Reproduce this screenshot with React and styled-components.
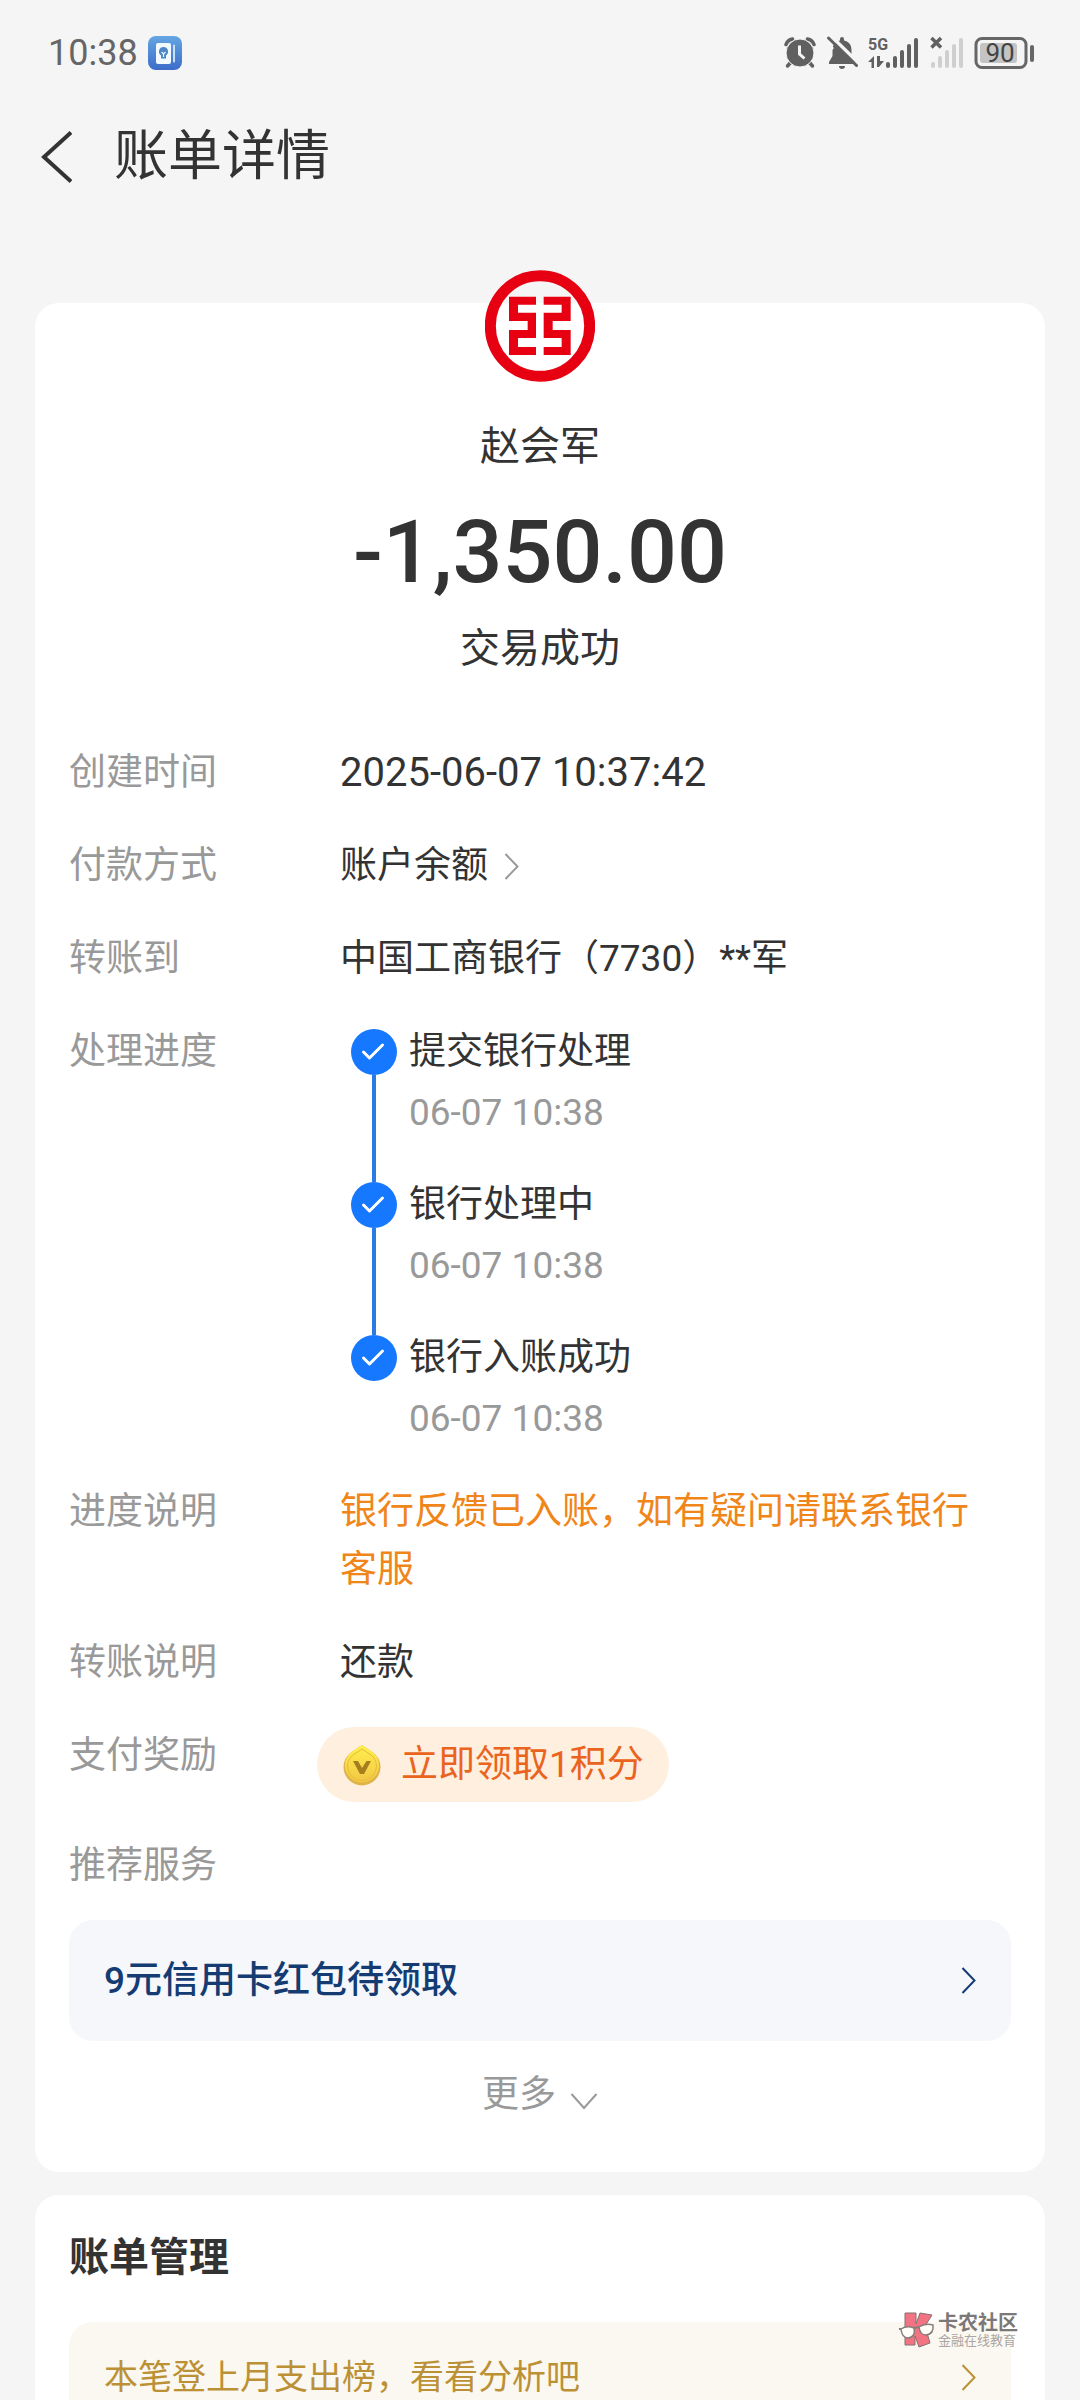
import React from 'react';
import styled, { createGlobalStyle, css } from 'styled-components';

const GlobalStyle = createGlobalStyle`
  * {
    box-sizing: border-box;
  }

  body {
    margin: 0;
    background: #f5f5f5;
    color: #333333;
    font-family: Roboto, 'Noto Sans CJK SC', sans-serif;
    font-size: 37px;
    line-height: 58px;
  }

  button {
    padding: 0;
    border: 0;
    background: none;
    color: inherit;
    font: inherit;
    cursor: pointer;
  }

  a {
    text-decoration: none;
  }

  svg {
    display: block;
    flex: none;
  }
`;

const Screen = styled.div`
  position: relative;
  display: flex;
  flex-direction: column;
  height: 100vh;
  overflow: hidden;
`;

const StatusBar = styled.div`
  display: flex;
  flex: none;
  align-items: center;
  justify-content: space-between;
  height: 106px;
  padding: 0 44px 0 48px;
  color: #666666;
  font-size: 36px;
`;

const StatusGroup = styled.div`
  display: flex;
  align-items: center;
  gap: 10px;
`;

const Header = styled.header`
  display: flex;
  flex: none;
  align-items: center;
  gap: 42px;
  height: 102px;
  padding: 0 40px;
`;

const Title = styled.h1`
  margin: 0;
  font-size: 54px;
  font-weight: 400;
  line-height: 80px;
`;

const Content = styled.main`
  display: flex;
  flex-direction: column;
  flex: none;
  gap: 23px;
  padding: 95px 35px 0;
`;

const Card = styled.section`
  padding: 0 34px;
  border-radius: 24px;
  background: #ffffff;
`;

const Hero = styled.div`
  display: flex;
  flex-direction: column;
  align-items: center;
  margin-top: -33px;
  padding-bottom: 66px;
`;

const HeroText = styled.p`
  margin: 0;
  font-size: 40px;
`;

const Payee = styled(HeroText)`
  margin-top: 36px;
`;

const Amount = styled.strong`
  margin: 28px 0 20px;
  font-size: 88px;
  font-weight: 500;
  line-height: 96px;
`;

const Details = styled.dl`
  display: flex;
  flex-direction: column;
  gap: 35px;
  margin: 0;
`;

const Row = styled.div`
  display: flex;
  align-items: flex-start;
`;

const Label = styled.dt`
  flex: none;
  width: 271px;
  color: #999999;
`;

const Value = styled.dd`
  flex: 1;
  margin: 0;
  padding-right: 20px;
  color: ${p => (p.$notice ? '#f08519' : '#333333')};
  font-size: ${p => (p.$numeric ? '40px' : '37px')};
`;

const MethodButton = styled.button`
  display: flex;
  align-items: center;
  gap: 16px;
`;

const Steps = styled.ol`
  margin: 0;
  padding: 6px 0 0 11px;
  list-style: none;
`;

const Step = styled.li`
  display: flex;
  gap: 12px;
`;

const Marker = styled.div`
  display: flex;
  flex-direction: column;
  align-items: center;
`;

const Connector = styled.div`
  flex: 1;
  width: 4px;
  background: #2b7be4;
`;

const StepText = styled.div`
  margin-top: -6px;
  padding-bottom: ${p => (p.$last ? '0' : '40px')};
`;

const StepTime = styled.time`
  display: block;
  margin-top: 3px;
  color: #999999;
`;

const RewardButton = styled.button`
  display: flex;
  align-items: center;
  gap: 20px;
  height: 75px;
  margin-left: -23px;
  padding: 0 25px 0 26px;
  border-radius: 38px;
  background: #ffefdf;
  color: #ea6420;
`;

const banner = css`
  display: flex;
  align-items: center;
  justify-content: space-between;
  padding: 0 35px;
  border-radius: 24px;
`;

const OfferLink = styled.a`
  ${banner}
  height: 121px;
  margin-top: 25px;
  background: #f5f7fb;
  color: #143c73;
  font-weight: 500;
`;

const MoreButton = styled.button`
  display: flex;
  align-items: center;
  gap: 14px;
  margin: 0 auto;
  padding: 25px 0 48px;
  color: #999999;
`;

const SectionTitle = styled.h2`
  margin: 0;
  padding: 34px 0 35px;
  font-size: 40px;
  font-weight: 700;
`;

const RankLink = styled.a`
  ${banner}
  height: 110px;
  background: #fbf8f1;
  color: #bc9136;
  font-size: 34px;
`;

const Watermark = styled.div`
  position: absolute;
  right: 62px;
  bottom: 52px;
  display: flex;
  align-items: center;
  gap: 3px;
  color: #7d7878;
`;

const WatermarkText = styled.div`
  display: flex;
  flex-direction: column;
  font-size: 20px;
  font-weight: 700;
  line-height: 21px;
`;

const WatermarkSub = styled.small`
  color: #aaa6a4;
  font-size: 13px;
  font-weight: 400;
  line-height: 14px;
`;

const Chevron = ({ color = '#999999' }) => (
  <svg width="15" height="27" viewBox="0 0 15 27" fill="none" aria-hidden="true">
    <path d="M1.5 1L13.5 13.5L1.5 26" stroke={color} strokeWidth="2" />
  </svg>
);

const ChevronDown = () => (
  <svg width="28" height="30" viewBox="0 0 28 30" fill="none" aria-hidden="true">
    <path d="M1.5 14L14 28L26.5 14" stroke="#999999" strokeWidth="2" />
  </svg>
);

const BackIcon = () => (
  <svg width="32" height="52" viewBox="0 0 32 52" fill="none" aria-hidden="true">
    <path d="M31 1.5L4 26L31 50.5" stroke="#333333" strokeWidth="4" />
  </svg>
);

const NotebookIcon = () => (
  <svg width="34" height="34" viewBox="0 0 34 34" aria-hidden="true">
    <defs>
      <linearGradient id="notebook" x1="0" y1="0" x2="0" y2="1">
        <stop offset="0" stopColor="#64a6e2" />
        <stop offset="1" stopColor="#3d6cc9" />
      </linearGradient>
    </defs>
    <rect width="34" height="34" rx="8" fill="url(#notebook)" />
    <rect x="8" y="7" width="15" height="21" rx="2" fill="#f2f9ff" />
    <rect x="25" y="8.5" width="2" height="18" rx="1" fill="#c9e0f6" />
    <path d="M15.5 11a4.6 4.6 0 0 0-2.5 8.4v3h5v-3a4.6 4.6 0 0 0-2.5-8.4z" fill="#4f86c6" />
    <path d="M13.5 16l2 2 2-2M15.5 18v3" stroke="#f2f9ff" strokeWidth="1.2" fill="none" />
  </svg>
);

const AlarmIcon = () => (
  <svg width="32" height="32" viewBox="0 0 32 32" aria-hidden="true">
    <g fill="none" stroke="#606060" strokeLinecap="round">
      <path d="M2 7.5Q3.5 3 8.5 2M30 7.5Q28.5 3 23.5 2" strokeWidth="3.5" />
      <path d="M7 25L3.5 29M25 25L28.5 29" strokeWidth="3.5" />
    </g>
    <circle cx="16" cy="16" r="14" fill="#606060" stroke="#f5f5f5" strokeWidth="1" />
    <path d="M15.5 8.5V17L20.5 21.5" fill="none" stroke="#f5f5f5" strokeWidth="3" />
  </svg>
);

const MuteIcon = () => (
  <svg width="32" height="34" viewBox="0 0 32 34" aria-hidden="true">
    <path
      d="M14 4.5V3a2 2 0 0 1 4 0v1.5C23 5.5 25.5 9 25.5 14v6l3.5 6v2H3v-2l3.5-6v-6C6.5 9 9 5.5 14 4.5z"
      fill="#606060"
    />
    <path d="M13 30h6a3 3 0 0 1-6 0z" fill="#606060" />
    <path d="M5.5 0.5L33 27.5" stroke="#f5f5f5" strokeWidth="3.5" />
    <path d="M2.5 2L30.5 29.5" stroke="#606060" strokeWidth="3" strokeLinecap="round" />
    <path d="M0 4L8 12L4.5 16L0 12z" fill="#f5f5f5" />
  </svg>
);

const bars = [0, 1, 2, 3, 4];

const SignalIcon = () => (
  <svg width="52" height="34" viewBox="0 0 52 34" fill="#606060" aria-hidden="true">
    <text x="0" y="14" fontFamily="Roboto" fontSize="16" fontWeight="700">
      5G
    </text>
    <path d="M0 26L6 20V32H3.5V26zM9 20h3v5l4 0-5 6H9z" />
    {bars.map(i => (
      <rect key={i} x={18 + i * 7} y={26 - i * 6} width="4" height={6 + i * 6} rx="2" />
    ))}
  </svg>
);

const NoSignalIcon = () => (
  <svg width="34" height="34" viewBox="0 0 34 34" fill="#cfcfcf" aria-hidden="true">
    {bars.map(i => (
      <rect key={i} x={1 + i * 7} y={26 - i * 6} width="4" height={6 + i * 6} rx="2" />
    ))}
    <path d="M1.5 2L11 11.5M11 2L1.5 11.5" stroke="#606060" strokeWidth="3.5" />
  </svg>
);

const BatteryIcon = () => (
  <svg width="62" height="34" viewBox="0 0 62 34" aria-hidden="true">
    <rect x="2" y="2.5" width="50" height="29" rx="6" fill="none" stroke="#666666" strokeWidth="3" />
    <rect x="6" y="7" width="37" height="20" rx="3" fill="#c4c4c4" />
    <rect x="56" y="9" width="4" height="17" rx="2" fill="#666666" />
    <text x="26" y="26" textAnchor="middle" fontFamily="Roboto" fontSize="26" fill="#444444">
      90
    </text>
  </svg>
);

const BankLogo = () => (
  <svg width="110" height="112" viewBox="0 0 330 336" role="img" aria-label="中国工商银行">
    <ellipse cx="165" cy="168" rx="149" ry="151" fill="none" stroke="#e60012" strokeWidth="33" />
    <path
      d="M72 80H153V104H99V128H153V204H99V231H153V255H72V180H128V153H72zM176 80H257V153H203V180H257V255H176V231H230V204H176V128H230V104H176z"
      fill="#e60012"
    />
  </svg>
);

const CheckIcon = () => (
  <svg width="46" height="46" viewBox="0 0 46 46" aria-hidden="true">
    <circle cx="23" cy="23" r="23" fill="#1677ff" />
    <path
      d="M12.5 23L18.5 29L31.5 16"
      fill="none"
      stroke="#ffffff"
      strokeWidth="3"
      strokeLinecap="round"
      strokeLinejoin="round"
    />
  </svg>
);

const CoinIcon = () => (
  <svg width="38" height="42" viewBox="0 0 38 42" aria-hidden="true">
    <defs>
      <linearGradient id="coin" x1="0" y1="0" x2="0" y2="1">
        <stop offset="0" stopColor="#fff04d" />
        <stop offset="1" stopColor="#f3c545" />
      </linearGradient>
    </defs>
    <path
      d="M19 1L30 8.5A18.5 18.5 0 0 1 37.5 23A18.5 18.5 0 0 1 0.5 23A18.5 18.5 0 0 1 8 8.5z"
      fill="#dfb348"
    />
    <path
      d="M19 1L29.5 8A17.5 17.5 0 0 1 36 21.5A17 17 0 0 1 2 21.5A17.5 17.5 0 0 1 8.5 8z"
      fill="url(#coin)"
    />
    <path
      d="M19 5L28 11A15 15 0 0 1 33.5 22A14.5 14.5 0 0 1 4.5 22A15 15 0 0 1 10 11z"
      fill="none"
      stroke="#e3bd3c"
    />
    <path d="M10 17H15L19 24L23.5 17H28L21 30H17z" fill="#a57f1e" />
  </svg>
);

const WatermarkLogo = () => (
  <svg width="36" height="36" viewBox="0 0 36 36" aria-hidden="true">
    <path
      d="M6 1H17V12L21 1L33 3L26 14L31 31L20 35L16 24V33H6z"
      fill="#f27482"
      stroke="#857070"
      strokeLinejoin="round"
    />
    <g fill="#fffef8" stroke="#8a7c78" strokeWidth="1.5">
      <path d="M2 17Q8 13 15 16Q17 25 9 26Q3 26 2 17z" />
      <path d="M20 15Q26 11 34 13Q35 22 27 23Q21 23 20 15z" />
    </g>
    <path d="M0 17L2 17M15 16L20 15" stroke="#8a7c78" strokeWidth="2" />
  </svg>
);

const steps = ['提交银行处理', '银行处理中', '银行入账成功'];

function BillDetail() {
  return (
    <Screen lang="zh-CN">
      <GlobalStyle />
      <StatusBar>
        <StatusGroup>
          10:38
          <NotebookIcon />
        </StatusGroup>
        <StatusGroup>
          <AlarmIcon />
          <MuteIcon />
          <SignalIcon />
          <NoSignalIcon />
          <BatteryIcon />
        </StatusGroup>
      </StatusBar>

      <Header>
        <button type="button" aria-label="返回">
          <BackIcon />
        </button>
        <Title>账单详情</Title>
      </Header>

      <Content>
        <Card>
          <Hero>
            <BankLogo />
            <Payee>赵会军</Payee>
            <Amount>-1,350.00</Amount>
            <HeroText>交易成功</HeroText>
          </Hero>

          <Details>
            <Row>
              <Label>创建时间</Label>
              <Value $numeric>2025-06-07 10:37:42</Value>
            </Row>
            <Row>
              <Label>付款方式</Label>
              <Value>
                <MethodButton type="button">
                  账户余额
                  <Chevron />
                </MethodButton>
              </Value>
            </Row>
            <Row>
              <Label>转账到</Label>
              <Value>中国工商银行（7730）**军</Value>
            </Row>
            <Row>
              <Label>处理进度</Label>
              <Value>
                <Steps>
                  {steps.map((step, i) => (
                    <Step key={step}>
                      <Marker>
                        <CheckIcon />
                        {i < steps.length - 1 && <Connector />}
                      </Marker>
                      <StepText $last={i === steps.length - 1}>
                        {step}
                        <StepTime>06-07 10:38</StepTime>
                      </StepText>
                    </Step>
                  ))}
                </Steps>
              </Value>
            </Row>
            <Row>
              <Label>进度说明</Label>
              <Value $notice>银行反馈已入账，如有疑问请联系银行客服</Value>
            </Row>
            <Row>
              <Label>转账说明</Label>
              <Value>还款</Value>
            </Row>
            <Row>
              <Label>支付奖励</Label>
              <Value>
                <RewardButton type="button">
                  <CoinIcon />
                  立即领取1积分
                </RewardButton>
              </Value>
            </Row>
            <Row>
              <Label>推荐服务</Label>
            </Row>
          </Details>

          <OfferLink href="#offer">
            9元信用卡红包待领取
            <Chevron color="#143c73" />
          </OfferLink>
          <MoreButton type="button">
            更多
            <ChevronDown />
          </MoreButton>
        </Card>

        <Card>
          <SectionTitle>账单管理</SectionTitle>
          <RankLink href="#rank">
            本笔登上月支出榜，看看分析吧
            <Chevron color="#bc9136" />
          </RankLink>
        </Card>
      </Content>

      <Watermark>
        <WatermarkLogo />
        <WatermarkText>
          卡农社区
          <WatermarkSub>金融在线教育</WatermarkSub>
        </WatermarkText>
      </Watermark>
    </Screen>
  );
}

export default BillDetail;
